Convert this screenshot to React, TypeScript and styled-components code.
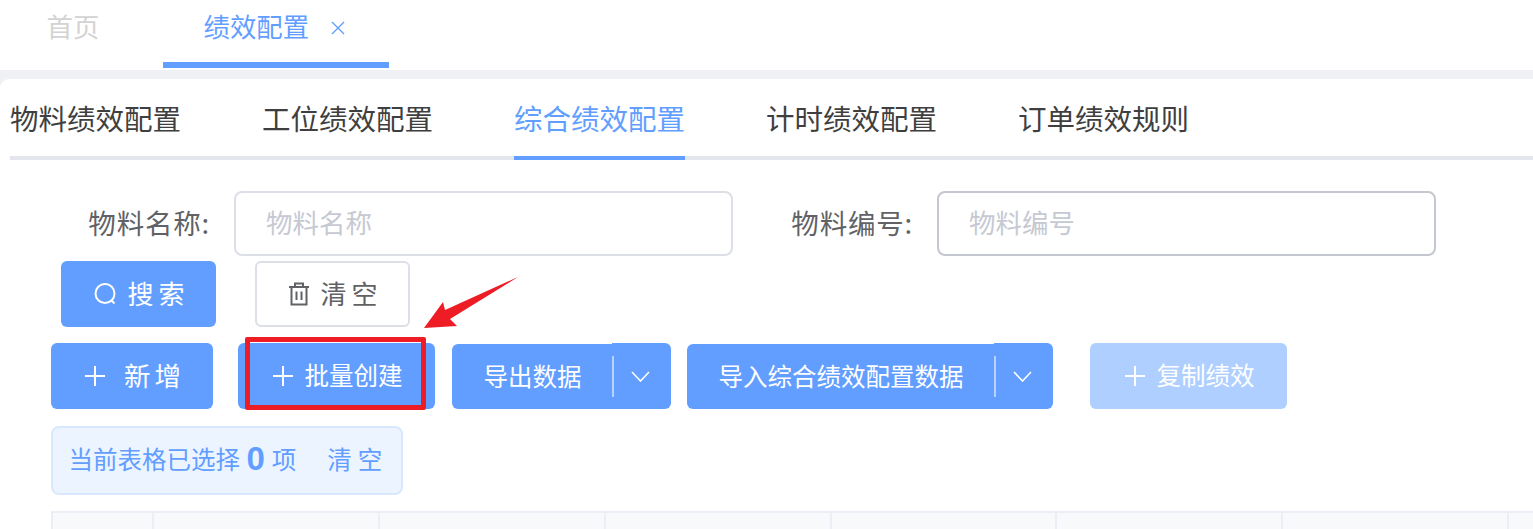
import React from 'react';
import styled, { createGlobalStyle } from 'styled-components';

const Global = createGlobalStyle`
  html, body { margin: 0; padding: 0; background: #fff; overflow: hidden; }
  * { box-sizing: border-box; }
  body { font-family: "Noto Sans CJK SC", "Liberation Sans", sans-serif; }
`;

const Page = styled.div`
  position: relative;
  width: 1533px;
  height: 529px;
  overflow: hidden;
  background: #f0f1f5;
  display: flex;
  flex-direction: column;
`;

const TopBar = styled.div`
  height: 70px;
  background: #fff;
  display: flex;
  padding-left: 6px;
  gap: 22px;
  flex-shrink: 0;
`;

const TopTab = styled.div<{ $active?: boolean }>`
  width: ${p => (p.$active ? 226 : 135)}px;
  height: 68px;
  padding: 7px 0 0 40.5px;
  display: flex;
  align-items: flex-start;
  font-size: 26.4px;
  line-height: 38px;
  color: ${p => (p.$active ? '#629eff' : '#d3d3d3')};
  border-bottom: 6px solid ${p => (p.$active ? '#629eff' : 'transparent')};
`;

const CloseIcon = styled.svg`
  width: 16px;
  height: 16px;
  margin: 13px 0 0 21px;
  stroke: #629eff;
  stroke-width: 1.4;
  fill: none;
`;

const Card = styled.div`
  margin-top: 9px;
  flex: 1;
  background: #fff;
  border-top-left-radius: 9px;
  padding-left: 10px;
`;

const SubTabs = styled.div`
  height: 81px;
  display: flex;
  gap: 81px;
  border-bottom: 4px solid #e4e6ee;
`;

const SubTab = styled.div<{ $active?: boolean }>`
  height: 81px;
  padding-top: 18px;
  font-size: 28.5px;
  line-height: 42px;
  white-space: nowrap;
  color: ${p => (p.$active ? '#629eff' : '#3f3f3f')};
  border-bottom: 4px solid ${p => (p.$active ? '#629eff' : 'transparent')};
`;

const FormRow = styled.div`
  margin-top: 31px;
  display: flex;
  height: 65px;
`;

const Field = styled.div`
  display: flex;
  align-items: center;
  flex-shrink: 0;
`;

const FieldLabel = styled.label<{ $width: number }>`
  width: ${p => p.$width}px;
  flex-shrink: 0;
  padding: 0 24px 3px 0;
  text-align: right;
  font-size: 27.5px;
  letter-spacing: 0.8px;
  color: #606266;
  white-space: nowrap;
`;

const TextBox = styled.div<{ $dark?: boolean }>`
  width: 499px;
  height: 65px;
  flex-shrink: 0;
  border: 2px solid ${p => (p.$dark ? '#c4c7cf' : '#dcdfe6')};
  border-radius: 8px;
  padding-left: 30px;
  font-size: 26.5px;
  line-height: 57px;
  color: #c6c9d2;
`;

const SearchRow = styled.div`
  margin: 5px 0 0 51px;
  display: flex;
  gap: 39px;
`;

const FormButton = styled.div<{ $plain?: boolean }>`
  width: 155px;
  height: 66px;
  border-radius: 6px;
  display: flex;
  align-items: center;
  justify-content: center;
  gap: 10px;
  padding-left: 6px;
  font-size: 26px;
  letter-spacing: 5px;
  color: ${p => (p.$plain ? '#606266' : '#fff')};
  background: ${p => (p.$plain ? '#fff' : '#629eff')};
  border: ${p => (p.$plain ? '2px solid #dcdfe6' : 'none')};
  span { padding-bottom: 4px; }
  svg { flex-shrink: 0; }
`;

const ActionRow = styled.div`
  margin: 16px 0 0 41px;
  display: flex;
  height: 66px;
`;

const ActionButton = styled.div<{ $width: number; $after: number; $disabled?: boolean }>`
  width: ${p => p.$width}px;
  margin-right: ${p => p.$after}px;
  height: 66px;
  flex-shrink: 0;
  border-radius: 6px;
  display: flex;
  align-items: center;
  justify-content: center;
  gap: 12px;
  padding-left: 2px;
  font-size: 24.5px;
  color: #fff;
  white-space: nowrap;
  background: ${p => (p.$disabled ? '#aecfff' : '#629eff')};
  span { padding-bottom: 3px; }
`;

const SpacedText = styled.span`
  font-size: 26.5px;
  letter-spacing: 4px;
  margin: 0 -4px 0 7px;
`;

const Split = styled.div<{ $after: number }>`
  display: flex;
  margin-right: ${p => p.$after}px;
  flex-shrink: 0;
`;

const SplitMain = styled.div<{ $width: number }>`
  width: ${p => p.$width}px;
  height: 65px;
  margin-top: 1px;
  padding: 0 0 3px 1px;
  background: #629eff;
  border-radius: 6px 0 0 6px;
  display: flex;
  align-items: center;
  justify-content: center;
  font-size: 24.5px;
  color: #fff;
  white-space: nowrap;
`;

const SplitArrow = styled.div`
  width: 59px;
  height: 66px;
  padding-right: 2px;
  background: #629eff;
  border-radius: 0 6px 6px 0;
  display: flex;
  align-items: center;
  justify-content: center;
  position: relative;
  &::before {
    content: '';
    position: absolute;
    left: 0;
    top: 13px;
    bottom: 12px;
    width: 2px;
    background: #b8d3ff;
  }
`;

const SelectionBar = styled.div`
  margin: 17px 0 0 41px;
  width: 352px;
  height: 69px;
  border: 2px solid #d9e8ff;
  border-radius: 8px;
  background: #ecf4ff;
  display: flex;
  align-items: center;
  padding: 0 0 5px 15.5px;
  font-size: 24.5px;
  color: #629eff;
  white-space: nowrap;
`;

const Count = styled.b`
  font-size: 33px;
  margin: 0 7px 0 6.5px;
  font-family: "Liberation Sans", sans-serif;
  line-height: 1;
`;

const ClearLink = styled.span`
  margin-left: 31px;
  letter-spacing: 6px;
`;

const TableHead = styled.div`
  margin: 16px 0 0 41px;
  display: flex;
  height: 40px;
  border-top: 2px solid #ebeef5;
  border-left: 2px solid #ebeef5;
  background: #f8f9fb;
`;

const HeadCell = styled.div<{ $width: number }>`
  width: ${p => p.$width}px;
  flex-shrink: 0;
  border-right: 2px solid #ebeef5;
`;

const Overlay = styled.svg`
  position: absolute;
  left: 0;
  top: 0;
  pointer-events: none;
`;

const HighlightBox = styled.div`
  position: absolute;
  left: 245px;
  top: 337px;
  width: 181px;
  height: 73px;
  border: 5px solid #ee1c25;
  border-radius: 2px;
`;

const Plus = () => (
  <svg width="20" height="20" viewBox="0 0 20 20" stroke="#fff" strokeWidth="2" fill="none">
    <path d="M0 10H20M10 0V20" />
  </svg>
);

const Chevron = () => (
  <svg width="19" height="11" viewBox="0 0 19 11" stroke="#fff" strokeWidth="1.6" fill="none">
    <path d="M1 1l8.500 9 8.500-9" />
  </svg>
);

const columns = [101, 226, 226, 226, 225, 226, 226, 60];

export default function App() {
  return (
    <Page>
      <Global />
      <TopBar>
        <TopTab>首页</TopTab>
        <TopTab $active>
          绩效配置
          <CloseIcon viewBox="0 0 16 16"><path d="M2 2l12 12M14 2L2 14" /></CloseIcon>
        </TopTab>
      </TopBar>
      <Card>
        <SubTabs>
          <SubTab>物料绩效配置</SubTab>
          <SubTab>工位绩效配置</SubTab>
          <SubTab $active>综合绩效配置</SubTab>
          <SubTab>计时绩效配置</SubTab>
          <SubTab>订单绩效规则</SubTab>
        </SubTabs>
        <FormRow>
          <Field>
            <FieldLabel $width={224}>物料名称:</FieldLabel>
            <TextBox>物料名称</TextBox>
          </Field>
          <Field>
            <FieldLabel $width={204}>物料编号:</FieldLabel>
            <TextBox $dark>物料编号</TextBox>
          </Field>
        </FormRow>
        <SearchRow>
          <FormButton>
            <svg width="24" height="24" viewBox="0 0 24 24" stroke="#fff" strokeWidth="2" fill="none">
              <circle cx="12" cy="11.500" r="9.500" />
              <path d="M18.500 18.500l3 3" />
            </svg>
            <span>搜索</span>
          </FormButton>
          <FormButton $plain>
            <svg width="22" height="24" viewBox="0 0 22 24" stroke="#606266" strokeWidth="2" fill="none">
              <path d="M1 5H21M7 5V1.500H15V5M3.500 5V22.500H18.500V5M8.500 9.500V18M13.500 9.500V18" />
            </svg>
            <span>清空</span>
          </FormButton>
        </SearchRow>
        <ActionRow>
          <ActionButton $width={162} $after={25}>
            <Plus />
            <SpacedText>新增</SpacedText>
          </ActionButton>
          <ActionButton $width={197} $after={17}>
            <Plus />
            <span>批量创建</span>
          </ActionButton>
          <Split $after={16}>
            <SplitMain $width={160}>导出数据</SplitMain>
            <SplitArrow><Chevron /></SplitArrow>
          </Split>
          <Split $after={37}>
            <SplitMain $width={307}>导入综合绩效配置数据</SplitMain>
            <SplitArrow><Chevron /></SplitArrow>
          </Split>
          <ActionButton $width={197} $after={0} $disabled>
            <Plus />
            <span>复制绩效</span>
          </ActionButton>
        </ActionRow>
        <SelectionBar>
          当前表格已选择<Count>0</Count>项<ClearLink>清空</ClearLink>
        </SelectionBar>
        <TableHead>
          {columns.map((w, i) => <HeadCell key={i} $width={w} />)}
        </TableHead>
      </Card>
      <HighlightBox />
      <Overlay width="1533" height="529" viewBox="0 0 1533 529">
        <path d="M518 277L445 310L443 302L424 328L457 326L450 319Z" fill="#ee1c25" />
      </Overlay>
    </Page>
  );
}
